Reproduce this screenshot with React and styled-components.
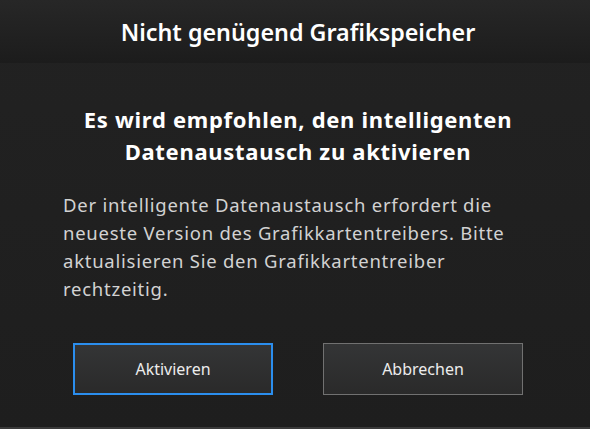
import React from "react";
import styled, { createGlobalStyle } from "styled-components";

const Global = createGlobalStyle`
  html, body { margin: 0; padding: 0; background: #202020; }
  body { font-family: "Noto Sans", "Open Sans", sans-serif; }
  * { box-sizing: border-box; }
`;

const Dialog = styled.div`
  width: 590px;
  height: 429px;
  display: flex;
  flex-direction: column;
  background: linear-gradient(180deg, #222222 0%, #1e1e1e 100%);
  border-bottom: 2px solid #3a3a3a;
`;

const Header = styled.div`
  height: 63px;
  flex: none;
  display: flex;
  align-items: center;
  justify-content: center;
  padding-left: 6px;
  background: linear-gradient(180deg, #272727 0%, #1c1c1c 100%);
  color: #ffffff;
  font-size: 23.3px;
  font-weight: 600;
`;

const Body = styled.div`
  flex: 1;
  display: flex;
  flex-direction: column;
  padding: 40px 63px 0 63px;
`;

const Heading = styled.h2`
  margin: 0;
  text-align: center;
  color: #ffffff;
  font-size: 22px;
  font-weight: 700;
  line-height: 32px;
  letter-spacing: 0.7px;
  padding-left: 6px;
`;

const Text = styled.p`
  margin: 24px 0 0 0;
  color: #d2d2d2;
  font-size: 18.5px;
  line-height: 28px;
  letter-spacing: 0.75px;
  font-weight: 400;
`;

const Actions = styled.div`
  display: flex;
  gap: 50px;
  margin-top: 40px;
  padding-left: 10px;
`;

const Button = styled.button`
  width: 200px;
  height: 52px;
  background: linear-gradient(180deg, #343536 0%, #2a2a2a 100%);
  border: ${(p) => (p.$primary ? "2px solid #2b8eee" : "1px solid #717171")};
  color: #ececec;
  font-family: inherit;
  font-size: 16px;
  font-weight: 400;
  padding: 0;
  cursor: pointer;
`;

export default function App() {
  return (
    <>
      <Global />
      <Dialog>
        <Header>Nicht genügend Grafikspeicher</Header>
        <Body>
          <Heading>
            Es wird empfohlen, den intelligenten
            <br />
            Datenaustausch zu aktivieren
          </Heading>
          <Text>
            Der intelligente Datenaustausch erfordert die neueste Version des
            Grafikkartentreibers. Bitte aktualisieren Sie den
            Grafikkartentreiber rechtzeitig.
          </Text>
          <Actions>
            <Button $primary>Aktivieren</Button>
            <Button>Abbrechen</Button>
          </Actions>
        </Body>
      </Dialog>
    </>
  );
}
